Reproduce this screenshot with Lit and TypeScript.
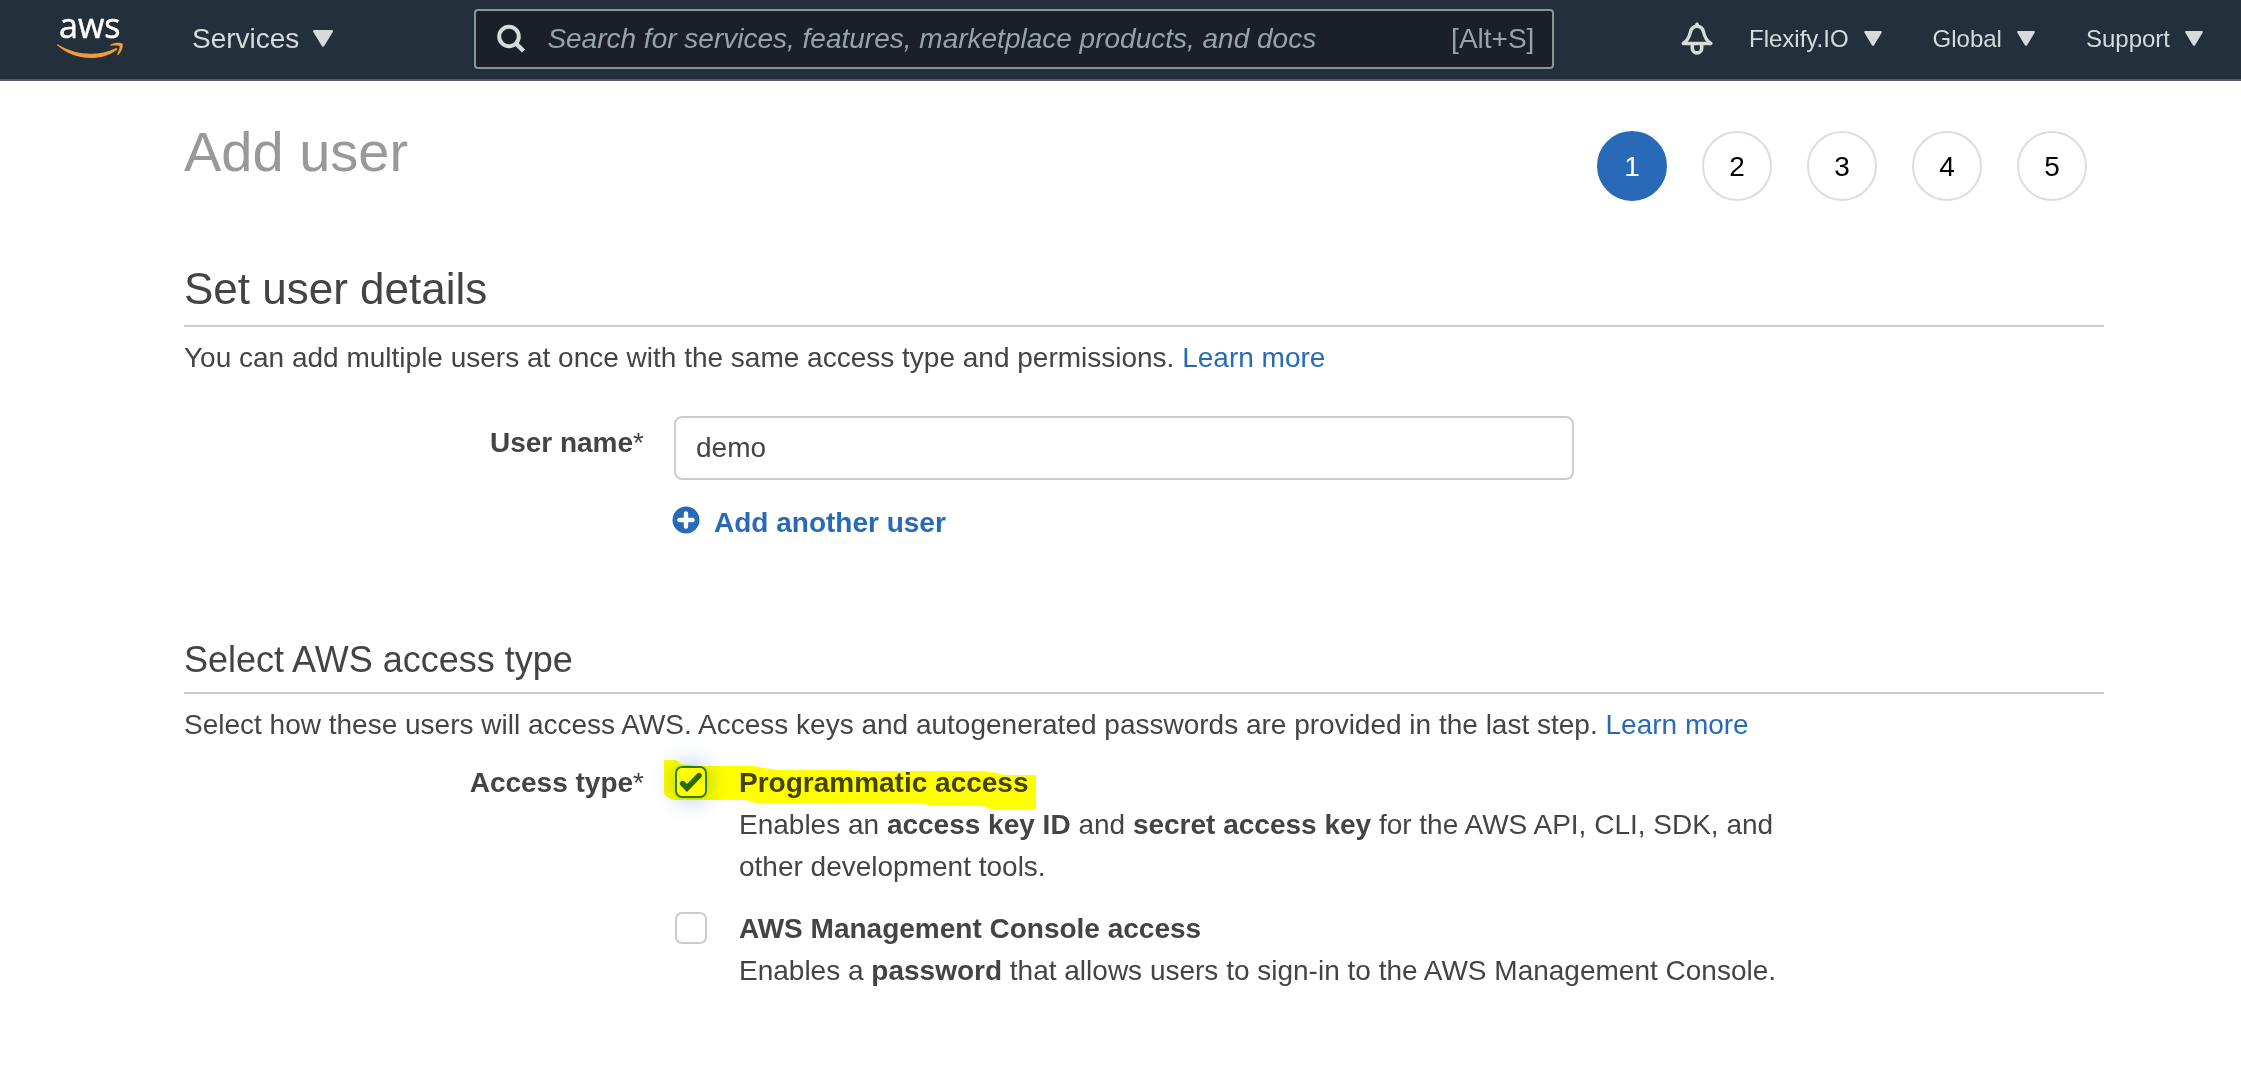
import { LitElement, html, css } from "lit";
import { customElement, property, state } from "lit/decorators.js";

@customElement("nav-menu")
class NavMenu extends LitElement {
  @property() label = "";
  @property({ type: Boolean, reflect: true }) large = false;

  static styles = css`
    :host { display: block; }
    .menu {
      display: flex;
      align-items: center;
      gap: 15px;
      padding: 0;
      border: 0;
      background: none;
      color: #d5dbdb;
      font: 24px/32px "Liberation Sans", Arial, sans-serif;
      cursor: pointer;
    }
    .caret { display: block; width: 18px; height: 15px; fill: #d5dbdb; }
    :host([large]) .menu { font-size: 28px; gap: 14px; }
    :host([large]) .caret { width: 20px; height: 17px; }
  `;

  render() {
    return html`<button class="menu" type="button" aria-haspopup="true">
      <span>${this.label}</span>
      <svg class="caret" viewBox="0 0 20 17" aria-hidden="true">
        <path d="M1.4 0h17.2c1.2 0 1.7 1 1.1 2L11.2 16.1c-.6 1-1.8 1-2.4 0L.3 2C-.3 1 .2 0 1.4 0z" />
      </svg>
    </button>`;
  }
}

@customElement("wizard-steps")
class WizardSteps extends LitElement {
  @property({ type: Number }) count = 5;
  @property({ type: Number }) current = 1;

  static styles = css`
    :host { display: block; }
    .steps { display: flex; gap: 35px; margin: 0; padding: 0; list-style: none; }
    .step {
      box-sizing: border-box;
      width: 70px;
      height: 70px;
      border: 2px solid #dddddd;
      border-radius: 50%;
      color: #000;
      font-size: 28px;
      line-height: 68px;
      text-align: center;
    }
    .current { border-color: #286ab8; background: #286ab8; color: #fff; }
  `;

  render() {
    return html`<ol class="steps">
      ${Array.from({ length: this.count }, (_, i) => i + 1).map(
        (n) => html`<li class="step ${n === this.current ? "current" : ""}">${n}</li>`
      )}
    </ol>`;
  }
}

@customElement("access-option")
class AccessOption extends LitElement {
  @property() heading = "";
  @property({ type: Boolean }) checked = false;
  @property({ type: Boolean }) marked = false;

  static styles = css`
    :host { display: block; }
    .option {
      display: grid;
      grid-template-columns: 32px 1fr;
      column-gap: 32px;
      position: relative;
    }
    .box { display: grid; width: 32px; height: 32px; margin-top: 4px; }
    .box > * { grid-area: 1 / 1; }
    .tick {
      appearance: none;
      box-sizing: border-box;
      width: 32px;
      height: 32px;
      margin: 0;
      border: 2px solid #cccccc;
      border-radius: 7px;
      background: #fff;
    }
    .tick:checked { border-color: #2f7cc4; box-shadow: 0 0 24px #9fc0e6; }
    .check { display: none; width: 32px; height: 32px; pointer-events: none; }
    .tick:checked + .check { display: block; }
    .heading { display: block; font-weight: bold; }
    .text { margin: 0; }
    .marker {
      position: absolute;
      left: -11px;
      top: -2px;
      width: 372px;
      height: 50px;
      mix-blend-mode: multiply;
      pointer-events: none;
    }
  `;

  render() {
    return html`<div class="option">
      <span class="box">
        <input class="tick" id="tick" type="checkbox" aria-describedby="text" .checked=${this.checked}
          @change=${(e: Event) => (this.checked = (e.target as HTMLInputElement).checked)} />
        <svg class="check" viewBox="0 0 32 32" aria-hidden="true">
          <path d="M7.6 17.6 12 22 24 9.600" fill="none" stroke="#286ab8" stroke-width="5.600" stroke-linejoin="miter" stroke-linecap="round" />
        </svg>
      </span>
      <div>
        <label class="heading" for="tick">${this.heading}</label>
        <p class="text" id="text"><slot></slot></p>
      </div>
      ${this.marked
        ? html`<svg class="marker" viewBox="0 0 372 50" aria-hidden="true">
            <path fill="#ffff00" d="M0 0H12L17 4L25 5L32 6H90L100 8L118 10H182L205 11H318L334 13L341 15H372V49H327L318 46L300 45H266L250 43H92L82 40H10L4 38L0 34Z" />
          </svg>`
        : ""}
    </div>`;
  }
}

@customElement("app-root")
class AppRoot extends LitElement {
  @state() private userName = "demo";

  static styles = css`
    :host {
      display: block;
      color: #444444;
      background: #fff;
      font: 28px/42px "Liberation Sans", Arial, sans-serif;
    }
    a { color: #286ab8; text-decoration: none; }
    .bar {
      display: flex;
      align-items: center;
      box-sizing: border-box;
      height: 81px;
      padding: 0 38px 2px 56px;
      border-bottom: 2px solid #545b64;
      background: #242f3c;
    }
    .logo { display: block; width: 68px; height: 79px; margin: 2px 68px 0 0; }
    .logo svg { display: block; width: 68px; height: 79px; }
    .search {
      display: flex;
      align-items: center;
      box-sizing: border-box;
      flex: 0 1 1080px;
      height: 60px;
      margin-left: 141px;
      padding: 0 18px 0 20px;
      border: 2px solid #879596;
      border-radius: 4px;
      background: #1b1f28;
      color: #95a5a6;
    }
    .glass { display: block; width: 32px; height: 32px; margin-right: 19px; }
    .query {
      flex: 1;
      min-width: 0;
      padding: 0;
      border: 0;
      outline: 0;
      background: none;
      color: #d5dbdb;
      font: inherit;
    }
    .query::placeholder { color: #95a5a6; opacity: 1; font-style: italic; }
    .tools { display: flex; align-items: center; margin-left: auto; gap: 51px; }
    .bell { display: block; padding: 0; border: 0; background: none; margin-right: -15px; }
    .bell svg { display: block; width: 32px; height: 34px; }
    .page { padding: 50px 137px 60px 184px; }
    .top { display: flex; justify-content: space-between; padding-right: 17px; }
    .title { margin: -11px 0 0; color: #999999; font-size: 56px; line-height: 64px; font-weight: normal; }
    .section { margin: 0; border-bottom: 2px solid #cccccc; font-weight: normal; }
    .large { margin-top: 63px; padding-bottom: 11px; font-size: 44px; line-height: 50px; }
    .small { margin-top: 95px; padding-bottom: 11px; font-size: 36px; line-height: 42px; }
    .intro { margin: 10px 0 0; }
    .row { display: grid; grid-template-columns: 460px minmax(0, 1108px); column-gap: 30px; }
    .names { margin-top: 37px; }
    .types { margin-top: 16px; }
    .caption { font-weight: bold; text-align: right; }
    .star { font-weight: normal; }
    .names .caption { padding-top: 6px; }
    .name {
      box-sizing: border-box;
      display: block;
      width: 900px;
      max-width: 100%;
      height: 64px;
      padding: 0 20px;
      border: 2px solid #cccccc;
      border-radius: 8px;
      background: #fff;
      color: #444444;
      font: inherit;
    }
    .add {
      display: flex;
      align-items: center;
      gap: 14px;
      margin-top: 22px;
      padding: 0;
      border: 0;
      background: none;
      color: #286ab8;
      font: bold 28px/42px "Liberation Sans", Arial, sans-serif;
      cursor: pointer;
    }
    .plus { display: block; width: 28px; height: 28px; margin: 0 0 6px -2px; }
    .options { display: flex; flex-direction: column; gap: 20px; padding-left: 1px; }
  `;

  private star = html`<span class="star">*</span>`;

  render() {
    return html`
      <header class="bar">
        <a class="logo" href="#" aria-label="AWS home">
          <svg viewBox="0 0 68 79">
            <text x="3" y="38" fill="#fff" stroke="#fff" stroke-width=".5" font-family="Open Sans, Noto Sans, sans-serif" font-size="34">aws</text>
            <path fill="#f29a33" d="M1.600 44.200C20 55.500 42 56.600 59.500 48.200C61.200 47.600 62 49 60.600 50.200C53 55.500 44 58 35 58C21 58 10 53 1.200 45.300C.6 44.600 1 43.900 1.600 44.200ZM54.600 44.500C58 42.300 64 42.200 66.400 43.400C67.800 46 65.500 51.800 62.500 54.700C61.600 55.300 60.900 54.900 61.300 54C62.500 51 64.200 47.300 63.400 46.200C62.200 45.200 58.500 45.500 55 45.700C54 45.700 53.900 45 54.600 44.500Z" />
          </svg>
        </a>
        <nav><nav-menu label="Services" large></nav-menu></nav>
        <label class="search">
          <svg class="glass" viewBox="0 0 32 32" fill="none" stroke="#d5dbdb" aria-hidden="true">
            <circle cx="13" cy="13.500" r="9.800" stroke-width="4" />
            <path d="M19.500 20 27.500 28" stroke-width="4.400" />
          </svg>
          <input class="query" type="text" aria-label="Search" placeholder="Search for services, features, marketplace products, and docs" />
          <span>[Alt+S]</span>
        </label>
        <div class="tools">
          <button class="bell" type="button" aria-label="Notifications">
            <svg viewBox="0 0 32 34">
              <path d="M2.200 21.500C6.500 18.500 8.500 14.500 9.300 10.500C10.200 6.200 12 4.300 16 4.300C20 4.300 21.800 6.200 22.700 10.500C23.500 14.500 25.500 18.500 29.800 21.500Z" fill="none" stroke="#d5dbdb" stroke-width="3.400" stroke-linejoin="round" />
              <path d="M14 2Q16-1.500 18 2V5H14Z" fill="#d5dbdb" />
              <path d="M11.300 22.500V26.200A4.700 4.700 0 0 0 20.700 26.200V22.500" fill="none" stroke="#d5dbdb" stroke-width="3.600" />
            </svg>
          </button>
          <nav-menu label="Flexify.IO"></nav-menu>
          <nav-menu label="Global"></nav-menu>
          <nav-menu label="Support"></nav-menu>
        </div>
      </header>
      <main class="page">
        <div class="top">
          <h1 class="title">Add user</h1>
          <wizard-steps count="5" current="1"></wizard-steps>
        </div>

        <h2 class="section large">Set user details</h2>
        <p class="intro">
          You can add multiple users at once with the same access type and permissions.
          <a href="#">Learn more</a>
        </p>
        <div class="row names">
          <label class="caption" for="name">User name${this.star}</label>
          <div>
            <input class="name" id="name" type="text" .value=${this.userName}
              @input=${(e: Event) => (this.userName = (e.target as HTMLInputElement).value)} />
            <button class="add" type="button">
              <svg class="plus" viewBox="0 0 28 28" aria-hidden="true">
                <circle cx="14" cy="14" r="13.500" fill="#286ab8" />
                <path d="M14 7.500V20.500M7.500 14H20.500" stroke="#fff" stroke-width="4.400" stroke-linecap="round" />
              </svg>
              <span>Add another user</span>
            </button>
          </div>
        </div>

        <h3 class="section small">Select AWS access type</h3>
        <p class="intro">
          Select how these users will access AWS. Access keys and autogenerated passwords are provided in the last step.
          <a href="#">Learn more</a>
        </p>
        <div class="row types" role="group" aria-labelledby="types">
          <span class="caption" id="types">Access type${this.star}</span>
          <div class="options">
            <access-option heading="Programmatic access" checked marked>
              Enables an <b>access key ID</b> and <b>secret access key</b> for the AWS API, CLI, SDK, and other development tools.
            </access-option>
            <access-option heading="AWS Management Console access">
              Enables a <b>password</b> that allows users to sign-in to the AWS Management Console.
            </access-option>
          </div>
        </div>
      </main>
    `;
  }
}
